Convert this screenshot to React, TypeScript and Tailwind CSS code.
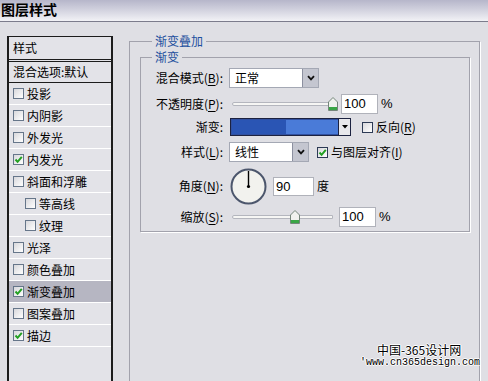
import type { ReactNode } from 'react';

const CJK = "font-['Noto_Sans_CJK_SC','Noto_Sans',sans-serif]";

const STYLES: { label: string; checked?: boolean; indent?: boolean; active?: boolean }[] = [
  { label: '投影' },
  { label: '内阴影' },
  { label: '外发光' },
  { label: '内发光', checked: true },
  { label: '斜面和浮雕' },
  { label: '等高线', indent: true },
  { label: '纹理', indent: true },
  { label: '光泽' },
  { label: '颜色叠加' },
  { label: '渐变叠加', checked: true, active: true },
  { label: '图案叠加' },
  { label: '描边', checked: true },
];

function CheckBox({ checked, dark }: { checked?: boolean; dark?: boolean }) {
  return (
    <span
      className={`flex h-[11px] w-[11px] shrink-0 items-center justify-center border bg-linear-to-br from-[#d8d8dc] to-white ${
        dark ? 'border-[#2c3a55]' : 'border-[#66768a]'
      }`}
    >
      {checked && (
        <svg width="9" height="9" viewBox="0 0 9 9">
          <path d="M1.5 4.5 L3.6 6.8 L7.8 1.8" fill="none" stroke="#22a022" strokeWidth="2" />
        </svg>
      )}
    </span>
  );
}

function Key({ children }: { children: ReactNode }) {
  return <span className="underline underline-offset-2">{children}</span>;
}

function Label({ children }: { children: ReactNode }) {
  return <span className="w-[82px] shrink-0 text-right whitespace-nowrap">{children}</span>;
}

function Select({ value, width }: { value: string; width: string }) {
  return (
    <div className={`flex h-[20px] ${width} border border-[#a4a8b4] bg-white`}>
      <span className="flex-1 pl-[5px] leading-[18px]">{value}</span>
      <span className="flex w-[16px] items-center justify-center border-l border-[#8c90a0] bg-[#c4c6d0]">
        <svg width="8" height="6" viewBox="0 0 8 6">
          <path d="M1 1.2 L4 4.4 L7 1.2" fill="none" stroke="#111" strokeWidth="1.8" />
        </svg>
      </span>
    </div>
  );
}

function Thumb() {
  return (
    <svg width="10" height="14" viewBox="0 0 10 14">
      <path d="M0.5 5 L5 0.5 L9.5 5 V13.5 H0.5 Z" fill="#f0f2ee" stroke="#74867a" />
      <rect x="1" y="10" width="8" height="3" fill="#3aa646" />
    </svg>
  );
}

function Slider({ thumbAt, width }: { thumbAt: string; width: string }) {
  return (
    <div className={`relative h-[20px] ${width} shrink-0`}>
      <div className="absolute top-[8px] right-0 left-[3px] h-[4px] rounded-l-full border border-[#b4b6be] bg-[#f6f6f4]" />
      <div className={`absolute top-[3px] ${thumbAt}`}>
        <Thumb />
      </div>
    </div>
  );
}

function NumberBox({ value, width, height = 'h-[20px]' }: { value: string; width: string; height?: string }) {
  return (
    <div
      className={`${height} ${width} shrink-0 border border-[#b0b2ba] bg-white pl-[2px] font-['Liberation_Sans',sans-serif] text-[13px] leading-[18px]`}
    >
      {value}
    </div>
  );
}

export default function App() {
  return (
    <div className={`relative h-[381px] w-[488px] overflow-hidden bg-[#dfdfe4] text-[12px] text-black ${CJK}`}>
      <div className="h-[22px] border-b border-[#7c7c8c] bg-linear-to-b from-[#b6b6ca] to-[#f2f2f6] pl-[1px]">
        <span className="block text-[14px] leading-[19px] font-bold">图层样式</span>
      </div>

      <div className="flex">
        <div className="mt-[14px] ml-[7px] h-[360px] w-[106px] shrink-0 border-x-2 border-t border-[#1c1c1c] bg-[#e3e3e8]">
          <div className="h-[23px] border-b border-[#1c1c1c] pl-[4px] leading-[22px]">样式</div>
          <div className="mt-[1px] h-[22px] border-y border-[#1c1c1c] pl-[4px] leading-[20px]">混合选项:默认</div>
          {STYLES.map((item) => (
            <div
              key={item.label}
              className={`flex h-[22px] items-center gap-[3px] border-b border-white ${item.indent ? 'pl-[16px]' : 'pl-[4px]'} ${
                item.active ? 'bg-[#b6b6c2]' : ''
              }`}
            >
              <CheckBox checked={item.checked} />
              <span className="leading-[21px]">{item.label}</span>
            </div>
          ))}
        </div>

        <fieldset className="mt-[12px] ml-[16px] h-[380px] w-[351px] shrink-0 border border-[#a2a2ac] pr-[9px] pl-[10px] shadow-[1px_1px_0_#fff]">
          <legend className="ml-[12px] px-[3px] text-[12px] leading-[14px] text-[#1d4f9e]">渐变叠加</legend>

          <fieldset className="mt-[3px] border border-[#a2a2ac] pt-[5px] pb-[4px] shadow-[1px_1px_0_#fff]">
            <legend className="ml-[11px] px-[3px] text-[12px] leading-[12px] text-[#1d4f9e]">渐变</legend>

            <div className="flex h-[20px] items-center gap-[6px]">
              <Label>
                混合模式(<Key>B</Key>):
              </Label>
              <Select value="正常" width="w-[90px]" />
            </div>

            <div className="mt-[6px] flex h-[20px] items-center gap-[6px]">
              <Label>
                不透明度(<Key>P</Key>):
              </Label>
              <Slider width="w-[106px]" thumbAt="left-[99px]" />
              <NumberBox value="100" width="w-[37px]" />
              <span className="-ml-[3px] font-['Liberation_Sans',sans-serif] text-[13px]">%</span>
            </div>

            <div className="mt-[4px] flex h-[18px] items-center gap-[6px]">
              <Label>渐变:</Label>
              <div className="ml-[1px] flex h-[18px] w-[121px] border border-[#1c2240] bg-[#1c2240]">
                <div className="w-[55px] border-y border-l border-[#3050a0] bg-[#2a55b4]" />
                <div className="w-[52px] border-y border-[#3050a0] bg-[#4a7bd8]" />
                <div className="flex flex-1 items-center justify-center border-l border-[#1c2240] bg-[#e8e8ec]">
                  <svg width="6" height="4" viewBox="0 0 6 4">
                    <polygon points="0,0 6,0 3,3.5" fill="#000" />
                  </svg>
                </div>
              </div>
              <div className="ml-[5px] flex items-center gap-[3px]">
                <CheckBox dark />
                <span>
                  反向(<Key>R</Key>)
                </span>
              </div>
            </div>

            <div className="mt-[6px] flex h-[20px] items-center gap-[6px]">
              <Label>
                样式(<Key>L</Key>):
              </Label>
              <Select value="线性" width="w-[80px]" />
              <div className="ml-[2px] flex items-center gap-[3px]">
                <CheckBox checked dark />
                <span>
                  与图层对齐(<Key>I</Key>)
                </span>
              </div>
            </div>

            <div className="mt-[6px] flex h-[36px] items-center gap-[6px]">
              <Label>
                角度(<Key>N</Key>):
              </Label>
              <svg className="ml-[1px]" width="37" height="37" viewBox="0 0 37 37">
                <circle cx="18.5" cy="18.5" r="17" fill="#f2f2ee" stroke="#4c566c" strokeWidth="2" />
                <line x1="18.5" y1="18.5" x2="18.5" y2="3" stroke="#000" strokeWidth="1.4" />
                <circle cx="18.5" cy="18.5" r="1.6" fill="#000" />
              </svg>
              <NumberBox value="90" width="w-[41px]" height="h-[19px]" />
              <span className="-ml-[3px]">度</span>
            </div>

            <div className="mt-[3px] flex h-[20px] items-center gap-[6px]">
              <Label>
                缩放(<Key>S</Key>):
              </Label>
              <Slider width="w-[104px]" thumbAt="left-[61px]" />
              <NumberBox value="100" width="w-[37px]" />
              <span className="-ml-[3px] font-['Liberation_Sans',sans-serif] text-[13px]">%</span>
            </div>
          </fieldset>
        </fieldset>
      </div>

      <div className="absolute top-[343px] left-[360px] leading-none [text-shadow:1px_0_#fff,-1px_0_#fff,0_1px_#fff,0_-1px_#fff]">
        <div className="pl-[17px] text-[12px] leading-[14px]">中国-365设计网</div>
        <div className="font-['Liberation_Mono',monospace] text-[10px] leading-[12px]">'www.cn365design.com</div>
      </div>
    </div>
  );
}
